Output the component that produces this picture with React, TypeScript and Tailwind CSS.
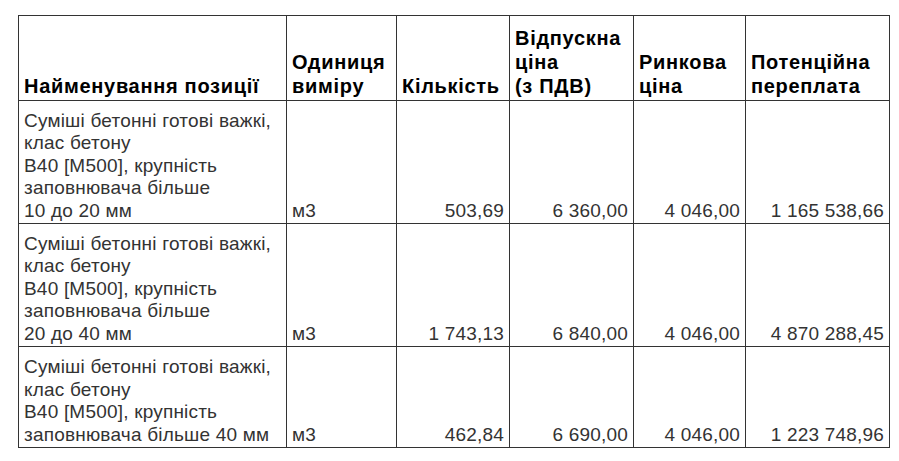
import React from 'react';

const rows = [
  {
    name: ['Суміші бетонні готові важкі,', 'клас бетону', 'B40 [M500], крупність', 'заповнювача більше', '10 до 20 мм'],
    unit: 'м3',
    qty: '503,69',
    price: '6 360,00',
    market: '4 046,00',
    over: '1 165 538,66',
    h: 'h-[123px]',
  },
  {
    name: ['Суміші бетонні готові важкі,', 'клас бетону', 'B40 [M500], крупність', 'заповнювача більше', '20 до 40 мм'],
    unit: 'м3',
    qty: '1 743,13',
    price: '6 840,00',
    market: '4 046,00',
    over: '4 870 288,45',
    h: 'h-[123px]',
  },
  {
    name: ['Суміші бетонні готові важкі,', 'клас бетону', 'B40 [M500], крупність', 'заповнювача більше 40 мм'],
    unit: 'м3',
    qty: '462,84',
    price: '6 690,00',
    market: '4 046,00',
    over: '1 223 748,96',
    h: 'h-[101px]',
  },
];

const th = 'border border-[#333] align-bottom text-left font-bold px-[5px] pb-[2px]';
const td = 'border border-[#333] align-bottom px-[5px] pb-[1px]';

export default function App() {
  return (
    <div className="w-[899px] h-[461px] bg-white pt-[15px] pl-[18px]" style={{ fontFamily: '"Liberation Sans", Arial, sans-serif' }}>
      <table className="border-collapse table-fixed w-[871px]">
        <colgroup>
          <col className="w-[268px]" />
          <col className="w-[110px]" />
          <col className="w-[113px]" />
          <col className="w-[124px]" />
          <col className="w-[112px]" />
          <col className="w-[144px]" />
        </colgroup>
        <thead>
          <tr className="h-[85px] text-[20px] leading-[24px] tracking-[0.7px] text-black">
            <th className={th}>Найменування позиції</th>
            <th className={th}>Одиниця<br />виміру</th>
            <th className={th}>Кількість</th>
            <th className={th}>Відпускна<br />ціна<br />(з ПДВ)</th>
            <th className={th}>Ринкова<br />ціна</th>
            <th className={th}>Потенційна<br />переплата</th>
          </tr>
        </thead>
        <tbody className="text-[19px] leading-[22.5px] tracking-[0.2px] text-[#333]">
          {rows.map((r, i) => (
            <tr key={i} className={r.h}>
              <td className={td}>
                {r.name.map((l, j) => (
                  <div key={j} className="whitespace-nowrap">{l}</div>
                ))}
              </td>
              <td className={td}>{r.unit}</td>
              <td className={td + ' text-right'}>{r.qty}</td>
              <td className={td + ' text-right'}>{r.price}</td>
              <td className={td + ' text-right'}>{r.market}</td>
              <td className={td + ' text-right'}>{r.over}</td>
            </tr>
          ))}
        </tbody>
      </table>
    </div>
  );
}
